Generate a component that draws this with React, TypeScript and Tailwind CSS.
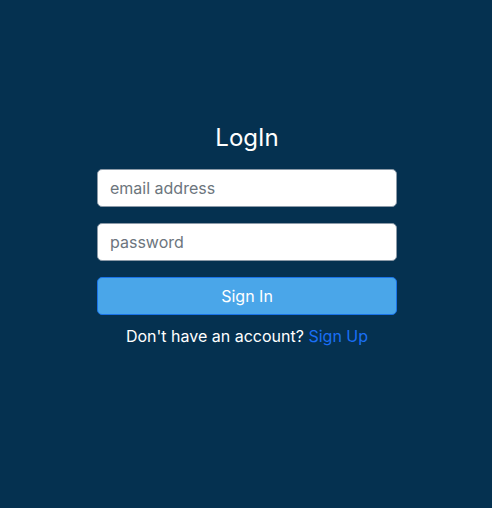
export default function App() {
  return (
    <main
      className="flex min-h-[508px] w-full flex-col items-center bg-[#053150] pl-[2px] pt-[122px]"
      style={{ fontFamily: "Inter, 'Noto Sans', sans-serif" }}
    >
      <h1 className="text-[24px] leading-8 text-white">LogIn</h1>
      <form className="mt-[15px] flex w-[300px] flex-col">
        <input
          type="email"
          placeholder="email address"
          className="h-[38px] w-full rounded-[5px] border border-[#8c9aa8] bg-white px-3 text-base text-gray-900 outline-none placeholder:text-[#6c757d]"
        />
        <input
          type="password"
          placeholder="password"
          className="mt-4 h-[38px] w-full rounded-[5px] border border-[#8c9aa8] bg-white px-3 text-base text-gray-900 outline-none placeholder:text-[#6c757d]"
        />
        <button
          type="submit"
          className="mt-4 h-[38px] w-full rounded-[5px] border border-[#1a73e8] bg-[#4aa6e9] text-base text-white"
        >
          Sign In
        </button>
        <p className="mt-[9px] text-center text-base leading-6 text-white">
          Don't have an account? <a className="text-[#1a6ff5]">Sign Up</a>
        </p>
      </form>
    </main>
  );
}
